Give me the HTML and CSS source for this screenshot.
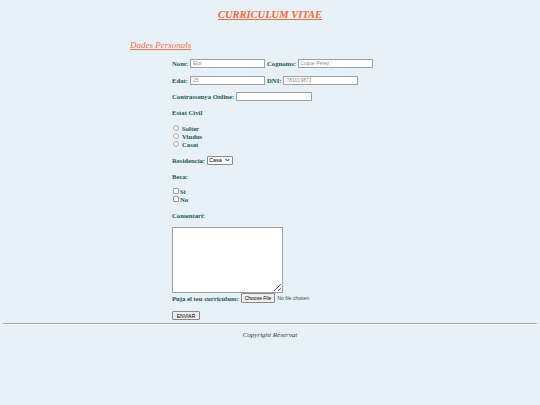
FILE: index.html
```html
<!DOCTYPE html>
<html lang="ca">
<head>
<meta charset="utf-8">
<title>Curriculum Vitae</title>
<link rel="stylesheet" href="styles.css">
</head>
<body>
<div class="page">
  <h1 class="title">CURRICULUM VITAE</h1>
  <h2 class="section">Dades Personals</h2>
  <form class="cv">
    <div class="row r1">
      <label class="lbl">Nom:</label>
      <input class="txt w75" type="text" placeholder="Eloi">
      <label class="lbl">Cognoms:</label>
      <input class="txt w75" type="text" placeholder="Luque Pérez">
    </div>
    <div class="row g9">
      <label class="lbl">Edat:</label>
      <input class="txt w75" type="text" placeholder="25">
      <label class="lbl">DNI:</label>
      <input class="txt w75" type="text" placeholder="78101987J">
    </div>
    <div class="row g8">
      <label class="lbl">Contrassenya Online:</label>
      <input class="txt w76" type="password">
    </div>
    <div class="row g8"><span class="lbl">Estat Civil</span></div>
    <div class="row g8 opt"><input class="radio" type="radio" name="ec"><span class="lbl">Solter</span></div>
    <div class="row opt"><input class="radio" type="radio" name="ec"><span class="lbl">Viudus</span></div>
    <div class="row opt"><input class="radio" type="radio" name="ec"><span class="lbl">Casat</span></div>
    <div class="row g8">
      <label class="lbl">Residencia:</label>
      <span class="sel-wrap">
        <select class="sel"><option>Casa</option></select>
        <svg class="sel-arrow" width="5" height="4" viewBox="0 0 5 4"><path d="M0.6 1 L2.5 3 L4.4 1" fill="none" stroke="#000" stroke-width="0.9"/></svg>
      </span>
    </div>
    <div class="row g8"><span class="lbl">Beca:</span></div>
    <div class="row g7 chk-row"><input class="chk" type="checkbox"><span class="lbl">Si</span></div>
    <div class="row chk-row"><input class="chk" type="checkbox"><span class="lbl">No</span></div>
    <div class="row g8"><span class="lbl">Comentari:</span></div>
    <textarea class="area"></textarea>
    <div class="row puja">
      <label class="lbl">Puja el teu curriculum:</label>
      <input class="file" type="file">
    </div>
    <button class="send" type="button">ENVIAR</button>
  </form>
  <hr class="rule">
  <p class="copy">Copyright Reservat</p>
</div>
</body>
</html>
```

FILE: styles.css
```css
html, body {
  margin: 0;
  padding: 0;
  background: #e8f0f8;
}
body {
  font-family: "Liberation Serif", "Times New Roman", serif;
  width: 540px;
  height: 405px;
  overflow: hidden;
}
.page {
  padding: 0 3px;
}
.title {
  margin: 0;
  padding-top: 8px;
  text-align: center;
  font-size: 10.5px;
  line-height: 13px;
  font-style: italic;
  font-weight: bold;
  text-decoration: underline;
  color: #ef6b40;
}
.section {
  margin: 19px 0 0 127px;
  font-size: 9px;
  line-height: 11px;
  font-style: italic;
  font-weight: normal;
  text-decoration: underline;
  color: #f0744a;
}
.cv {
  display: flex;
  flex-direction: column;
  align-items: flex-start;
  padding-left: 169px;
}
.row {
  display: flex;
  align-items: center;
  height: 8px;
  gap: 2px;
}
.r1 { margin-top: 8px; }
.g9 { margin-top: 9px; }
.g8 { margin-top: 8px; }
.g7 { margin-top: 7px; }
.lbl {
  font-size: 6.7px;
  font-weight: bold;
  color: #1b5a56;
  white-space: nowrap;
}
.txt {
  box-sizing: border-box;
  height: 9px;
  margin: 0;
  padding: 0 2px;
  border: 1px solid #a0a0a0;
  background: #fff;
  font-family: "Liberation Sans", Arial, sans-serif;
  font-size: 5px;
}
.txt::placeholder { color: #8a8a8a; }
.w75 { width: 75px; }
.w76 { width: 76px; }
.opt { gap: 3px; padding-left: 1px; }
.radio {
  appearance: none;
  -webkit-appearance: none;
  box-sizing: border-box;
  width: 6px;
  height: 6px;
  margin: 0;
  border: 1px solid #a6a6a6;
  border-radius: 50%;
  background: #fff;
}
.chk-row { gap: 1px; padding-left: 1px; }
.chk {
  appearance: none;
  -webkit-appearance: none;
  box-sizing: border-box;
  width: 6px;
  height: 6px;
  margin: 0;
  border: 1px solid #9a9a9a;
  border-radius: 1px;
  background: #fff;
}
.sel-wrap {
  position: relative;
  display: inline-flex;
}
.sel {
  appearance: none;
  -webkit-appearance: none;
  box-sizing: border-box;
  width: 26px;
  height: 9px;
  margin: 0;
  padding: 0 0 0 1px;
  border: 1px solid #8a8a8a;
  border-radius: 1px;
  background: #fff;
  font-family: "Liberation Sans", Arial, sans-serif;
  font-size: 5.5px;
  line-height: 7px;
  color: #000;
}
.sel-arrow {
  position: absolute;
  right: 3px;
  top: 2.5px;
  pointer-events: none;
}
.area {
  box-sizing: border-box;
  width: 111px;
  height: 66px;
  margin: 8px 0 0 0;
  border: 1px solid #a0a0a0;
  background: #fff;
  resize: both;
}
.puja {
  margin-top: 1px;
  gap: 2px;
}
.file {
  font-family: "Liberation Sans", Arial, sans-serif;
  font-size: 5px;
  color: #1b5a56;
  margin: 0;
  height: 10px;
}
.file::file-selector-button {
  font-size: 5px;
  padding: 1px 3px;
  margin-right: 2px;
  border: 1px solid #8a8a8a;
  border-radius: 1px;
  background: #efefef;
  color: #000;
}
.send {
  box-sizing: border-box;
  margin-top: 9px;
  width: 28px;
  height: 9px;
  padding: 0;
  border: 1px solid #8a8a8a;
  border-radius: 1px;
  background: #efefef;
  font-family: "Liberation Sans", Arial, sans-serif;
  font-size: 5px;
  color: #000;
}
.rule {
  margin: 3px 0 0 0;
  border: 0;
  border-top: 1px solid #a8a8a8;
  border-bottom: 1px solid #ffffff;
}
.copy {
  margin: 6px 0 0 0;
  text-align: center;
  font-size: 7px;
  line-height: 8px;
  font-style: italic;
  font-weight: normal;
  color: #3a3a3a;
}
```
